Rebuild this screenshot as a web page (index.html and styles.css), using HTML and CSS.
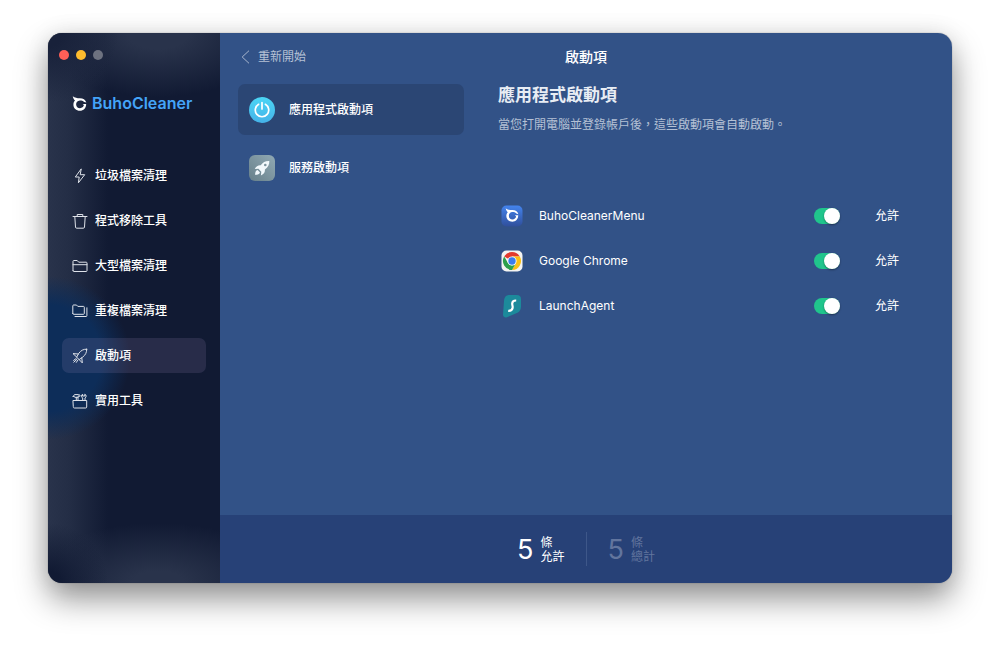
FILE: index.html
```
<!DOCTYPE html>
<html lang="zh-Hant">
<head>
  <meta charset="UTF-8" />
  <meta name="viewport" content="width=device-width,initial-scale=1.0" />
  <title>BuhoCleaner</title>
  <link rel="stylesheet" href="styles.css">
</head>
<body>

  <svg class="defs" width="0" height="0" aria-hidden="true">
    <symbol id="owl" viewBox="0 0 16 16">
      <path d="M.8 .2C3 2 5.500 2.300 8.300 2.300C12 2.300 14.300 3.800 15.300 7L12.900 6.400C11.600 4.800 9.700 4.600 8.300 4.700C5.900 4.800 4.300 6.900 4.400 9C4.500 11.400 6.200 13 8.500 13C10.700 13 12.300 11.700 12.700 9.700L11.300 8.400L15.100 8.400C15.200 12.600 12.200 15.700 8.400 15.700C4.500 15.700 1.500 12.800 1.500 9.200C1.500 7.500 2.100 6 3.200 4.900C2 3.800 1.200 2.200 .8 .2Z" fill="currentColor"/>
    </symbol>
  </svg>

  <div class="window">
    <aside class="sidebar">
      <div class="lights">
        <button class="light red" aria-label="關閉"></button>
        <button class="light yellow" aria-label="最小化"></button>
        <button class="light gray" aria-label="縮放"></button>
      </div>

      <div class="brand">
        <svg class="brand-icon"><use href="#owl"/></svg>
        <span>BuhoCleaner</span>
      </div>

      <nav class="menu">
        <a href="#junk">
          <svg viewBox="0 0 16 16"><path d="M9 1.200L3.300 9H7.200L6.400 14.800L12.700 6.700H8.600Z"/></svg>
          垃圾檔案清理
        </a>
        <a href="#uninstall">
          <svg viewBox="0 0 16 16"><path d="M1 3.500H15M5.200 3.500V1.500H10.800V3.500M2.800 3.500L3.500 14C3.500 14.800 4 15.200 4.700 15.200H11.300C12 15.200 12.500 14.800 12.500 14L13.200 3.500"/></svg>
          程式移除工具
        </a>
        <a href="#large">
          <svg viewBox="0 0 16 16"><path d="M1 12.700V3.300C1 2.800 1.300 2.500 1.800 2.500H5.200L6.700 4.200H14.200C14.700 4.200 15 4.500 15 5V12.700C15 13.200 14.700 13.500 14.200 13.500H1.800C1.300 13.500 1 13.200 1 12.700M1 6.700H15"/></svg>
          大型檔案清理
        </a>
        <a href="#duplicate">
          <svg viewBox="0 0 16 16"><path d="M.8 10.600V2.800C.8 2.300 1.100 2 1.600 2H4.500L5.800 3.400H11.500C12 3.400 12.300 3.700 12.300 4.200V10.500C12.300 11 12 11.300 11.500 11.300H1.600C1.100 11.300 .8 11 .8 10.600M14.900 4.800V12.700C14.900 13.200 14.600 13.500 14.100 13.500H3"/></svg>
          重複檔案清理
        </a>
        <a href="#startup" class="active">
          <svg viewBox="0 0 16 16"><path d="M14.700 1.200C11.300 1 8.800 2.600 6.800 5.300L4.600 9.200L7.200 11.600L10.700 9.100C13.400 7 14.800 4.600 14.700 1.200ZM6.300 6L1 5.600L4.700 9.100M9.800 9.800L10.300 14.900L7.200 11.600M4 10.600L1.600 12.400M5.800 12.200L4.300 14.400M1.800 14.200L4.800 11.400"/></svg>
          啟動項
        </a>
        <a href="#tools">
          <svg viewBox="0 0 16 16"><path d="M1.300 7.500H14.700V14C14.700 14.700 14.300 15 13.700 15H2.300C1.700 15 1.300 14.700 1.300 14ZM4.300 7.500V4.300M6 7.500V4.300M1 3.700L2.500 1.600H6.600C7.800 1.600 8.200 2.200 8 3.300L6.200 2.900V4.300H2.700L2 3.300ZM10.700 7.500V5C9.200 4.100 9.200 2 10.600 1.200V3H12.800V1.200C14.600 2 14.500 4.200 13 5V7.500"/></svg>
          實用工具
        </a>
      </nav>
    </aside>

    <main class="main">
      <header class="topbar">
        <button class="back">
          <svg viewBox="0 0 9 14"><path d="M8 .7L1.200 7L8 13.300"/></svg>
          重新開始
        </button>
        <h1>啟動項</h1>
      </header>

      <div class="content">
        <div class="kinds">
          <button class="kind active">
            <svg viewBox="0 0 26 26">
              <defs>
                <linearGradient id="powerFill" x1="0" y1="0" x2="0" y2="1"><stop stop-color="#4bd6f5"/><stop offset="1" stop-color="#45b2e8"/></linearGradient>
              </defs>
              <circle cx="13" cy="13" r="13" fill="url(#powerFill)"/>
              <path d="M9.600 7.300A6.700 6.700 0 1 0 16.400 7.300M13 5.500V12" fill="none" stroke="#fff" stroke-width="1.700" stroke-linecap="round"/>
            </svg>
            應用程式啟動項
          </button>
          <button class="kind">
            <svg viewBox="0 0 26 26">
              <defs>
                <linearGradient id="rocketFill" x1="1" y1="0" x2="0" y2="1"><stop stop-color="#91a9b4"/><stop offset="1" stop-color="#67808a"/></linearGradient>
              </defs>
              <rect width="26" height="26" rx="6" fill="url(#rocketFill)"/>
              <path d="M20.300 6C16.500 5.800 13.800 7.300 11.700 10.200C9.300 9.900 7.300 11 5.800 14L9.400 13.700L12.300 16.700L11.900 20.500C15 19 16.200 17 15.900 14.500C19 12.300 20.500 9.700 20.300 6Z" fill="#f1f8fc"/>
              <path d="M8.600 14.900C6.800 15.300 6.200 17 6 19.800C8.900 19.700 10.500 19 11 17.400Z" fill="#f1f8fc"/>
              <circle cx="16.300" cy="10" r="1.300" fill="#7b929d"/>
            </svg>
            服務啟動項
          </button>
        </div>

        <section class="detail">
          <h2>應用程式啟動項</h2>
          <p>當您打開電腦並登錄帳戶後，這些啟動項會自動啟動。</p>

          <ul class="apps">
            <li>
              <svg class="app-icon" viewBox="0 0 22 22">
                <defs>
                  <linearGradient id="buhoFill" x1="0" y1="0" x2="0" y2="1"><stop stop-color="#4484ee"/><stop offset="1" stop-color="#304f9b"/></linearGradient>
                </defs>
                <rect x=".5" y=".5" width="21" height="21" rx="5" fill="url(#buhoFill)"/>
                <use href="#owl" x="4" y="3" width="14" height="14" color="#fff"/>
              </svg>
              <span class="app-name">BuhoCleanerMenu</span>
              <input type="checkbox" class="switch" id="app1" checked>
              <label for="app1">允許</label>
            </li>
            <li>
              <svg class="app-icon" viewBox="0 0 22 22">
                <rect x=".5" y=".5" width="21" height="21" rx="5" fill="#f4f4f2"/>
                <path d="M11 11L3.200 6.500A9 9 0 0 1 18.800 6.500H11Z" fill="#e33b2e"/>
                <path d="M11 6.500H18.800A9 9 0 0 1 11 20L14.900 13.200Z" fill="#fbc116"/>
                <path d="M3.200 6.500L7.100 13.200L11 15.500L14.900 13.200L11 20A9 9 0 0 1 3.200 6.500Z" fill="#2da04c"/>
                <circle cx="11" cy="11" r="4.600" fill="#fff"/>
                <circle cx="11" cy="11" r="3.700" fill="#3b7ded"/>
              </svg>
              <span class="app-name">Google Chrome</span>
              <input type="checkbox" class="switch" id="app2" checked>
              <label for="app2">允許</label>
            </li>
            <li>
              <svg class="app-icon" viewBox="0 0 22 22">
                <path d="M8.500 0H15.500C18.500 0 20 1.500 20 4V11.500C20 14 19 16 17 17.500L6 22.300C4 23 2 22 2 19.500L3 6C3.300 2 5 0 8.500 0Z" fill="#1c8a9b"/>
                <path d="M15.200 5.500C12.500 5.400 11.300 6.400 11.200 8.500C11.100 10.300 12 11 11.600 13C11.200 15.200 9.600 15.900 7.200 15.800" fill="none" stroke="#fff" stroke-width="2.200"/>
              </svg>
              <span class="app-name">LaunchAgent</span>
              <input type="checkbox" class="switch" id="app3" checked>
              <label for="app3">允許</label>
            </li>
          </ul>
        </section>
      </div>

      <footer class="stats">
        <div class="stat">
          <strong>5</strong>
          <span>條<br>允許</span>
        </div>
        <div class="stat total">
          <strong>5</strong>
          <span>條<br>總計</span>
        </div>
      </footer>
    </main>
  </div>

</body>
</html>
```
FILE: styles.css
```
* { margin: 0; padding: 0; box-sizing: border-box; }
body {
  min-height: 100vh;
  display: flex;
  padding: 33px 48px 64px;
  background: #fff;
  color: #fff;
  font-family: Inter, "Noto Sans CJK TC", sans-serif;
  font-size: 12px;
  line-height: 18px;
}
button {
  border: 0;
  background: none;
  color: inherit;
  font: inherit;
  cursor: pointer;
}
a { color: inherit; text-decoration: none; }
svg { flex: none; overflow: visible; }
.defs { position: absolute; }

.window {
  flex: 1;
  display: flex;
  overflow: hidden;
  border-radius: 14px;
  box-shadow: 0 0 1px rgba(0,0,0,.6), 0 16px 32px rgba(0,0,0,.42), 0 0 24px rgba(0,0,0,.08);
}

/* sidebar */
.sidebar {
  width: 172px;
  flex: none;
  padding: 17px 0;
  background:
    radial-gradient(circle 82px at 0 325px, #0d2d59 0, #0d2d59 65%, rgba(13,45,89,0) 100%),
    radial-gradient(circle 60px at 0 100%, #111a33 20%, rgba(17,26,51,0) 100%),
    radial-gradient(circle 70px at 0 0, #18213a 20%, rgba(24,33,58,0) 100%),
    radial-gradient(ellipse 120px 64px at 110px 0, #29334b 25%, rgba(41,51,75,0) 100%),
    radial-gradient(ellipse 130px 60px at 110px 100%, #29334b 20%, rgba(41,51,75,0) 100%),
    linear-gradient(90deg, #29334b 0, #242e46 20px, #111a33 60px);
}
.lights { display: flex; gap: 7px; padding: 0 11px; }
.light { width: 10px; height: 10px; border-radius: 50%; }
.red { background: #ff5f57; }
.yellow { background: #febc2e; }
.gray { background: #6d7280; }
.brand {
  display: flex;
  align-items: center;
  gap: 5px;
  margin-top: 33px;
  padding: 0 24px;
  color: #44a4f8;
  font-size: 16px;
  font-weight: 600;
  line-height: 20px;
}
.brand-icon { width: 15px; height: 15px; color: #fff; }
.menu {
  display: flex;
  flex-direction: column;
  gap: 10px;
  margin-top: 45px;
  padding: 0 14px;
}
.menu a {
  display: flex;
  align-items: center;
  gap: 7px;
  height: 35px;
  padding: 0 10px;
  border-radius: 7px;
  font-weight: 500;
}
.menu a.active { background: rgba(160,140,190,.16); }
.menu svg {
  width: 16px;
  height: 16px;
  fill: none;
  stroke: #dfe3ea;
  stroke-width: 1;
  stroke-linejoin: round;
  stroke-linecap: round;
}

/* main area */
.main {
  flex: 1;
  min-width: 0;
  display: flex;
  flex-direction: column;
  background: #325287;
}
.topbar {
  display: grid;
  grid-template-columns: 1fr auto 1fr;
  align-items: center;
  height: 48px;
  padding: 0 20px;
}
.topbar h1 { font-size: 14px; font-weight: 500; }
.back {
  display: flex;
  align-items: center;
  justify-self: start;
  gap: 8px;
  color: #b5c1d5;
}
.back svg {
  width: 9px;
  height: 14px;
  margin-left: 1px;
  fill: none;
  stroke: #a7b5cd;
}
.content {
  flex: 1;
  display: flex;
  gap: 34px;
  padding: 3px 53px 20px 18px;
}
.kinds {
  flex: 0 1 226px;
  display: flex;
  flex-direction: column;
  gap: 7px;
}
.kind {
  display: flex;
  align-items: center;
  gap: 14px;
  height: 51px;
  padding: 0 11px;
  border-radius: 7px;
  font-weight: 500;
}
.kind.active { background: #2b4674; }
.kind svg { width: 26px; height: 26px; }
.detail { flex: 1; min-width: 0; }
.detail h2 {
  font-size: 17px;
  font-weight: 700;
  line-height: 22px;
  color: #e8edf4;
}
.detail p { margin-top: 10px; color: #b5c1d5; }
.apps {
  display: flex;
  flex-direction: column;
  gap: 10px;
  margin-top: 64px;
  padding-left: 3px;
  list-style: none;
}
.apps li { display: flex; align-items: center; height: 35px; }
.app-icon { width: 22px; height: 22px; }
.app-name { flex: 1; padding-left: 16px; }
.switch {
  appearance: none;
  flex: none;
  display: flex;
  width: 26px;
  height: 16px;
  margin-right: 35px;
  border-radius: 8px;
  background: #6b7f9f;
  cursor: pointer;
}
.switch::before {
  content: "";
  width: 16px;
  height: 16px;
  border-radius: 50%;
  background: #fff;
  box-shadow: 0 1px 2px rgba(0,0,0,.4);
}
.switch:checked { justify-content: flex-end; background: #20c58c; }

/* footer */
.stats {
  display: flex;
  justify-content: center;
  align-items: center;
  height: 68px;
  background: #274177;
}
.stat {
  display: flex;
  align-items: center;
  gap: 7px;
  height: 34px;
  padding: 2px 21px 0;
  line-height: 14px;
}
.stat strong { font-size: 27px; font-weight: 400; }
.stat.total {
  border-left: 1px solid #3e5789;
  color: #62759e;
}
```
